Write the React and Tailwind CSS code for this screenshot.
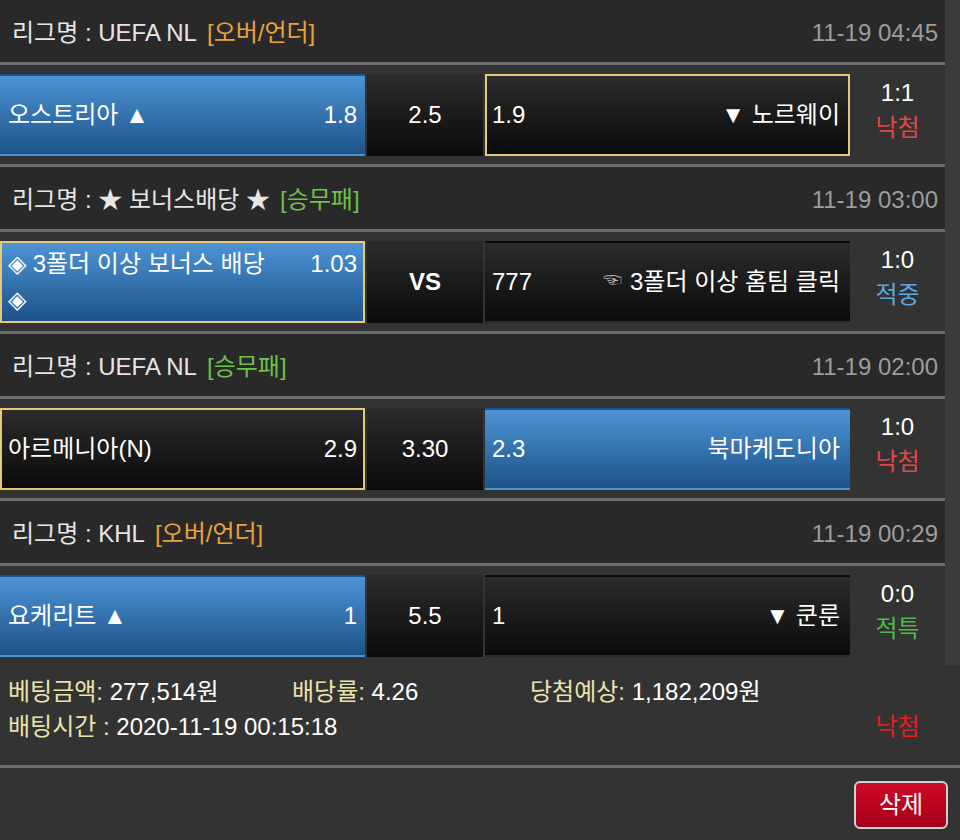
import React from 'react';

const games = [
  {
    league: 'UEFA NL',
    tag: '[오버/언더]',
    tagColor: 'text-[#e9a23b]',
    time: '11-19 04:45',
    home: { name: '오스트리아 ▲', odds: '1.8', blue: true },
    mid: '2.5',
    away: { name: '▼ 노르웨이', odds: '1.9', picked: true },
    score: '1:1',
    status: '낙첨',
    statusColor: 'text-[#e04848]',
  },
  {
    league: '★ 보너스배당 ★',
    tag: '[승무패]',
    tagColor: 'text-[#6cc24a]',
    time: '11-19 03:00',
    home: { name: '◈ 3폴더 이상 보너스 배당', name2: '◈', odds: '1.03', blue: true, picked: true },
    mid: 'VS',
    midBold: true,
    away: { name: '3폴더 이상 홈팀 클릭', hand: true, odds: '777' },
    score: '1:0',
    status: '적중',
    statusColor: 'text-[#5aa6e0]',
  },
  {
    league: 'UEFA NL',
    tag: '[승무패]',
    tagColor: 'text-[#6cc24a]',
    time: '11-19 02:00',
    home: { name: '아르메니아(N)', odds: '2.9', picked: true },
    mid: '3.30',
    away: { name: '북마케도니아', odds: '2.3', blue: true },
    score: '1:0',
    status: '낙첨',
    statusColor: 'text-[#e04848]',
  },
  {
    league: 'KHL',
    tag: '[오버/언더]',
    tagColor: 'text-[#e9a23b]',
    time: '11-19 00:29',
    home: { name: '요케리트 ▲', odds: '1', blue: true },
    mid: '5.5',
    away: { name: '▼ 쿤룬', odds: '1' },
    score: '0:0',
    status: '적특',
    statusColor: 'text-[#4fb84a]',
  },
];

const cellBg = (side) =>
  side.blue
    ? 'bg-gradient-to-b from-[#4d94d6] to-[#1d5388]'
    : 'bg-gradient-to-b from-[#2c2c2c] to-[#0b0b0b]';

const cellBorder = (side) => (side.picked ? 'border-2 border-[#e6c878]' : 'border-2 border-transparent');

const HomeCell = ({ side }) => (
  <div className={`w-[365px] h-[82px] flex items-center pl-[6px] pr-[6px] ${cellBg(side)} ${cellBorder(side)}`}>
    <div className="w-full flex justify-between items-start">
      <span className="leading-[36px]">
        {side.name}
        {side.name2 && (
          <>
            <br />
            {side.name2}
          </>
        )}
      </span>
      <span className="leading-[36px]">{side.odds}</span>
    </div>
  </div>
);

const AwayCell = ({ side }) => (
  <div className={`w-[365px] h-[82px] flex items-center justify-between pl-[5px] pr-[8px] ${cellBg(side)} ${cellBorder(side)}`}>
    <span>{side.odds}</span>
    <span className="flex items-center">
      {side.hand && <span className="text-[19px] text-[#b5b5b5] mr-[8px]">☜</span>}
      {side.name}
    </span>
  </div>
);

const Game = ({ g, last }) => (
  <div>
    {/* league header */}
    <div className="h-[65px] bg-[#292929] flex items-center justify-between pl-3 pr-[7px] pt-[3px] border-b-[3px] border-[#6c6c6c]">
      <div className="text-[#e6e6e6]">
        리그명 : {g.league}
        <span className={`ml-[10px] ${g.tagColor}`}>{g.tag}</span>
      </div>
      <div className="text-[#9c9c9c]">{g.time}</div>
    </div>

    {/* match row */}
    <div
      className={`bg-[#333333] flex items-center text-white ${
        last ? 'h-[99px]' : 'h-[102px] border-b-[3px] border-[#6c6c6c]'
      }`}
    >
      <HomeCell side={g.home} />
      <div className={`ml-[2px] w-[116px] h-[82px] flex items-center justify-center bg-gradient-to-b from-[#2c2c2c] to-[#0b0b0b] ${g.midBold ? 'font-bold' : ''}`}>
        {g.mid}
      </div>
      <div className="ml-[2px]">
        <AwayCell side={g.away} />
      </div>
      <div className="w-[95px] pb-[9px] flex flex-col items-center leading-[35px]">
        <span>{g.score}</span>
        <span className={g.statusColor}>{g.status}</span>
      </div>
    </div>
  </div>
);

export default function App() {
  return (
    <div
      className="w-[960px] h-[840px] bg-[#333333] text-[24px] overflow-hidden"
      style={{ fontFamily: '"Liberation Sans", "Noto Sans CJK KR", sans-serif' }}
    >
      <div className="flex bg-[#3b3b3b]">
        <div className="w-[945px]">
          {games.map((g, i) => (
            <Game key={i} g={g} last={i === games.length - 1} />
          ))}
        </div>
      </div>

      {/* bet summary */}
      <div className="h-[103px] pt-[9px] border-b-[3px] border-[#6c6c6c] leading-[35px]">
        <div className="flex pl-[8px]">
          <div className="w-[284px]">
            <span className="text-[#ebe3ac]">베팅금액:</span>
            <span className="text-white"> 277,514원</span>
          </div>
          <div className="w-[238px]">
            <span className="text-[#ebe3ac]">배당률:</span>
            <span className="text-white"> 4.26</span>
          </div>
          <div>
            <span className="text-[#ebe3ac]">당첨예상:</span>
            <span className="text-white"> 1,182,209원</span>
          </div>
        </div>
        <div className="flex">
          <div className="w-[850px] pl-[8px]">
            <span className="text-[#ebe3ac]">배팅시간 :</span>
            <span className="text-white"> 2020-11-19 00:15:18</span>
          </div>
          <div className="w-[95px] text-center text-[#e02020]">낙첨</div>
        </div>
      </div>

      <div className="flex justify-end pt-[13px] pr-[12px]">
        <button className="w-[94px] h-[48px] rounded-md border-2 border-[#d0d0d0] bg-gradient-to-b from-[#cc0a24] to-[#a80018] text-white text-[24px]">
          삭제
        </button>
      </div>
    </div>
  );
}
